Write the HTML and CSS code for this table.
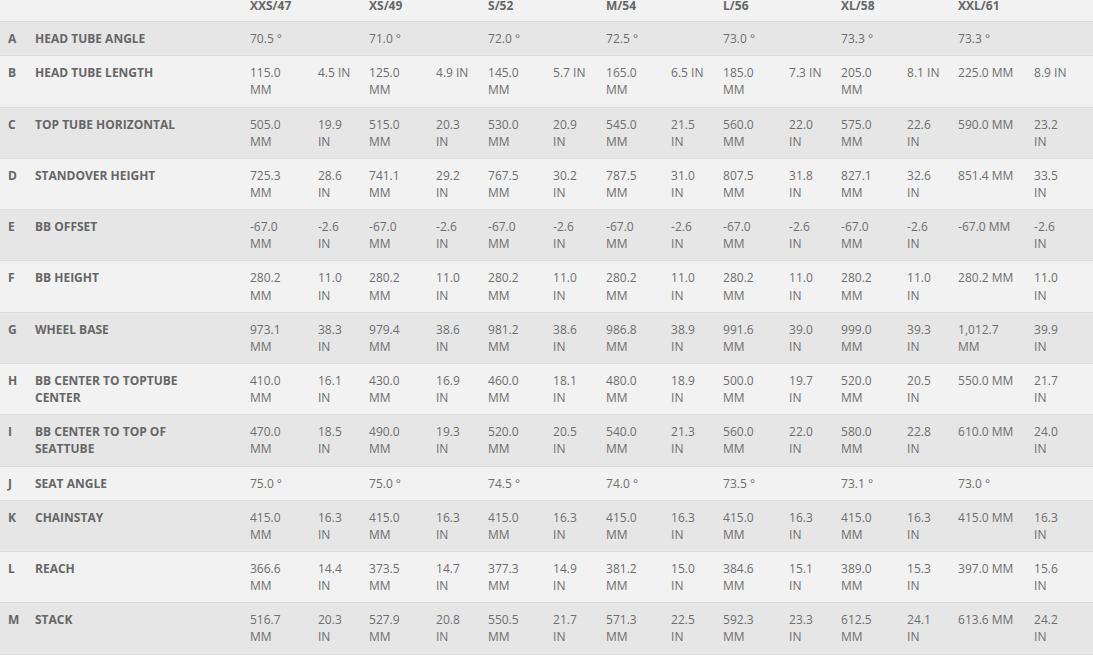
FILE: index.html
```html
<!DOCTYPE html>
<html>
<head>
<meta charset="utf-8">
<link rel="stylesheet" href="styles.css">
</head>
<body>
<table class="geo">
  <colgroup>
    <col class="c-key"><col class="c-label">
    <col class="c68"><col class="c51">
    <col class="c67"><col class="c52">
    <col class="c65"><col class="c53">
    <col class="c65"><col class="c52">
    <col class="c66"><col class="c52">
    <col class="c66"><col class="c51">
    <col class="c76"><col class="c67">
  </colgroup>
  <thead>
    <tr>
      <th></th><th></th>
      <th colspan="2">XXS/47</th>
      <th colspan="2">XS/49</th>
      <th colspan="2">S/52</th>
      <th colspan="2">M/54</th>
      <th colspan="2">L/56</th>
      <th colspan="2">XL/58</th>
      <th colspan="2">XXL/61</th>
    </tr>
  </thead>
  <tbody>
    <tr><td class="key">A</td><td class="label">HEAD TUBE ANGLE</td>
      <td>70.5 °</td><td></td><td>71.0 °</td><td></td><td>72.0 °</td><td></td><td>72.5 °</td><td></td><td>73.0 °</td><td></td><td>73.3 °</td><td></td><td>73.3 °</td><td class="last"></td></tr>
    <tr><td class="key">B</td><td class="label">HEAD TUBE LENGTH</td>
      <td>115.0 MM</td><td>4.5 IN</td><td>125.0 MM</td><td>4.9 IN</td><td>145.0 MM</td><td>5.7 IN</td><td>165.0 MM</td><td>6.5 IN</td><td>185.0 MM</td><td>7.3 IN</td><td>205.0 MM</td><td>8.1 IN</td><td>225.0 MM</td><td class="last">8.9 IN</td></tr>
    <tr><td class="key">C</td><td class="label">TOP TUBE HORIZONTAL</td>
      <td>505.0 MM</td><td>19.9 IN</td><td>515.0 MM</td><td>20.3 IN</td><td>530.0 MM</td><td>20.9 IN</td><td>545.0 MM</td><td>21.5 IN</td><td>560.0 MM</td><td>22.0 IN</td><td>575.0 MM</td><td>22.6 IN</td><td>590.0 MM</td><td class="last">23.2 IN</td></tr>
    <tr><td class="key">D</td><td class="label">STANDOVER HEIGHT</td>
      <td>725.3 MM</td><td>28.6 IN</td><td>741.1 MM</td><td>29.2 IN</td><td>767.5 MM</td><td>30.2 IN</td><td>787.5 MM</td><td>31.0 IN</td><td>807.5 MM</td><td>31.8 IN</td><td>827.1 MM</td><td>32.6 IN</td><td>851.4 MM</td><td class="last">33.5 IN</td></tr>
    <tr><td class="key">E</td><td class="label">BB OFFSET</td>
      <td>-67.0 MM</td><td>-2.6 IN</td><td>-67.0 MM</td><td>-2.6 IN</td><td>-67.0 MM</td><td>-2.6 IN</td><td>-67.0 MM</td><td>-2.6 IN</td><td>-67.0 MM</td><td>-2.6 IN</td><td>-67.0 MM</td><td>-2.6 IN</td><td>-67.0 MM</td><td class="last">-2.6 IN</td></tr>
    <tr><td class="key">F</td><td class="label">BB HEIGHT</td>
      <td>280.2 MM</td><td>11.0 IN</td><td>280.2 MM</td><td>11.0 IN</td><td>280.2 MM</td><td>11.0 IN</td><td>280.2 MM</td><td>11.0 IN</td><td>280.2 MM</td><td>11.0 IN</td><td>280.2 MM</td><td>11.0 IN</td><td>280.2 MM</td><td class="last">11.0 IN</td></tr>
    <tr><td class="key">G</td><td class="label">WHEEL BASE</td>
      <td>973.1 MM</td><td>38.3 IN</td><td>979.4 MM</td><td>38.6 IN</td><td>981.2 MM</td><td>38.6 IN</td><td>986.8 MM</td><td>38.9 IN</td><td>991.6 MM</td><td>39.0 IN</td><td>999.0 MM</td><td>39.3 IN</td><td>1,012.7 MM</td><td class="last">39.9 IN</td></tr>
    <tr><td class="key">H</td><td class="label">BB CENTER TO TOPTUBE CENTER</td>
      <td>410.0 MM</td><td>16.1 IN</td><td>430.0 MM</td><td>16.9 IN</td><td>460.0 MM</td><td>18.1 IN</td><td>480.0 MM</td><td>18.9 IN</td><td>500.0 MM</td><td>19.7 IN</td><td>520.0 MM</td><td>20.5 IN</td><td>550.0 MM</td><td class="last">21.7 IN</td></tr>
    <tr><td class="key">I</td><td class="label">BB CENTER TO TOP OF SEATTUBE</td>
      <td>470.0 MM</td><td>18.5 IN</td><td>490.0 MM</td><td>19.3 IN</td><td>520.0 MM</td><td>20.5 IN</td><td>540.0 MM</td><td>21.3 IN</td><td>560.0 MM</td><td>22.0 IN</td><td>580.0 MM</td><td>22.8 IN</td><td>610.0 MM</td><td class="last">24.0 IN</td></tr>
    <tr><td class="key">J</td><td class="label">SEAT ANGLE</td>
      <td>75.0 °</td><td></td><td>75.0 °</td><td></td><td>74.5 °</td><td></td><td>74.0 °</td><td></td><td>73.5 °</td><td></td><td>73.1 °</td><td></td><td>73.0 °</td><td class="last"></td></tr>
    <tr><td class="key">K</td><td class="label">CHAINSTAY</td>
      <td>415.0 MM</td><td>16.3 IN</td><td>415.0 MM</td><td>16.3 IN</td><td>415.0 MM</td><td>16.3 IN</td><td>415.0 MM</td><td>16.3 IN</td><td>415.0 MM</td><td>16.3 IN</td><td>415.0 MM</td><td>16.3 IN</td><td>415.0 MM</td><td class="last">16.3 IN</td></tr>
    <tr><td class="key">L</td><td class="label">REACH</td>
      <td>366.6 MM</td><td>14.4 IN</td><td>373.5 MM</td><td>14.7 IN</td><td>377.3 MM</td><td>14.9 IN</td><td>381.2 MM</td><td>15.0 IN</td><td>384.6 MM</td><td>15.1 IN</td><td>389.0 MM</td><td>15.3 IN</td><td>397.0 MM</td><td class="last">15.6 IN</td></tr>
    <tr><td class="key">M</td><td class="label">STACK</td>
      <td>516.7 MM</td><td>20.3 IN</td><td>527.9 MM</td><td>20.8 IN</td><td>550.5 MM</td><td>21.7 IN</td><td>571.3 MM</td><td>22.5 IN</td><td>592.3 MM</td><td>23.3 IN</td><td>612.5 MM</td><td>24.1 IN</td><td>613.6 MM</td><td class="last">24.2 IN</td></tr>
  </tbody>
</table>
</body>
</html>
```

FILE: styles.css
```css
html, body {
  margin: 0;
  padding: 0;
  background: #f2f2f2;
}

body {
  font-family: "Open Sans", "Liberation Sans", sans-serif;
  font-size: 12px;
  line-height: 1.428571;
  color: #6e6e6e;
  overflow: hidden;
}

.geo {
  width: 1093px;
  table-layout: fixed;
  border-collapse: collapse;
  margin-top: -3px;
}

.c-key { width: 27px; }
.c-label { width: 215px; }
.c51 { width: 51px; }
.c52 { width: 52px; }
.c53 { width: 53px; }
.c65 { width: 65px; }
.c66 { width: 66px; }
.c67 { width: 67px; }
.c68 { width: 68px; }
.c76 { width: 76px; }

.geo th {
  text-align: left;
  font-weight: 700;
  color: #666666;
  padding: 0 8px 7px 8px;
  border-bottom: 1px solid #dcdcdc;
  vertical-align: top;
}

.geo td {
  padding: 8px;
  vertical-align: top;
  border-bottom: 1px solid #dcdcdc;
  box-sizing: border-box;
}

.geo tbody tr:nth-child(odd) {
  background: #e6e6e6;
}

.geo tbody tr:nth-child(even) {
  background: #f2f2f2;
}

.geo td.key {
  font-weight: 700;
  color: #666666;
  padding-right: 0;
}

.geo td.label {
  font-weight: 700;
  color: #666666;
  padding-right: 40px;
}

.geo td:nth-child(8) {
  padding-right: 11px;
}

.geo td.last {
  padding-right: 24px;
}
```
